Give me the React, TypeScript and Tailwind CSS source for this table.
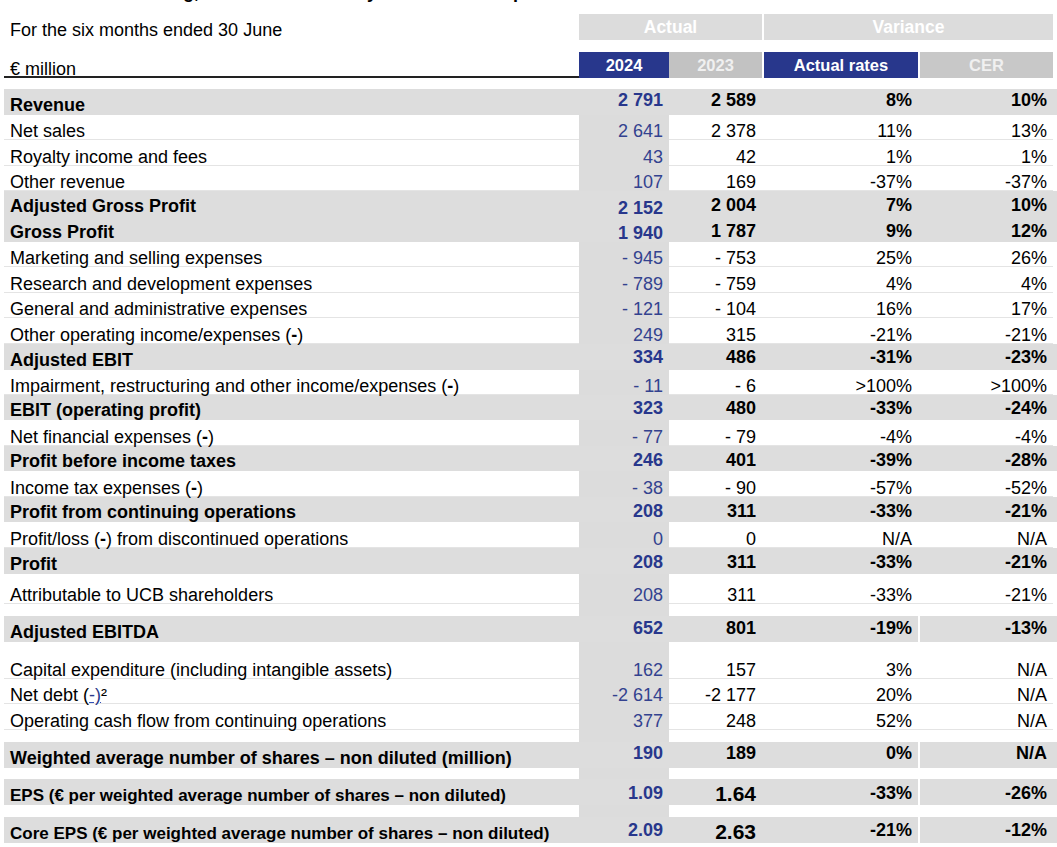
import React from "react";

type RowDef = {
  l: React.ReactNode;
  v?: [string, string, string, string];
  b?: boolean;
  h: number;
  gap?: boolean;
  small?: boolean;
  big?: boolean;
  spacer?: boolean;
  nt?: string;
  n24?: string;
};

const H: Record<number, string> = {
  11: "h-[11px]",
  12: "h-[12px]",
  25: "h-[25px]",
  26: "h-[26px]",
  30: "h-[30px]",
  37: "h-[37px]",
};

const GRID = "grid grid-cols-[575px_90px_93px_2px_154px_2px_133px]";

const M = () => <b>-</b>;

const rows: RowDef[] = [
  { l: "Revenue", v: ["2 791", "2 589", "8%", "10%"], b: true, h: 26, nt: "pb-[7px]" },
  { l: "Net sales", v: ["2 641", "2 378", "11%", "13%"], h: 25 },
  { l: "Royalty income and fees", v: ["43", "42", "1%", "1%"], h: 26 },
  { l: "Other revenue", v: ["107", "169", "-37%", "-37%"], h: 25 },
  {
    l: "Adjusted Gross Profit",
    v: ["2 152", "2 004", "7%", "10%"],
    b: true,
    h: 25,
    nt: "pb-[3px]",
    n24: "pb-[0px]",
  },
  {
    l: "Gross Profit",
    v: ["1 940", "1 787", "9%", "12%"],
    b: true,
    h: 26,
    nt: "pb-[3px]",
    n24: "pb-[1px]",
  },
  { l: "Marketing and selling expenses", v: ["- 945", "- 753", "25%", "26%"], h: 25 },
  { l: "Research and development expenses", v: ["- 789", "- 759", "4%", "4%"], h: 26 },
  { l: "General and administrative expenses", v: ["- 121", "- 104", "16%", "17%"], h: 25 },
  {
    l: (
      <>
        Other operating income/expenses (<M />)
      </>
    ),
    v: ["249", "315", "-21%", "-21%"],
    h: 26,
  },
  { l: "Adjusted EBIT", v: ["334", "486", "-31%", "-23%"], b: true, h: 26, nt: "pb-[5px]" },
  {
    l: (
      <>
        Impairment, restructuring and other income/expenses (<M />)
      </>
    ),
    v: ["- 11", "- 6", ">100%", ">100%"],
    h: 25,
  },
  { l: "EBIT (operating profit)", v: ["323", "480", "-33%", "-24%"], b: true, h: 25, nt: "pb-[4px]" },
  {
    l: (
      <>
        Net financial expenses (<M />)
      </>
    ),
    v: ["- 77", "- 79", "-4%", "-4%"],
    h: 26,
  },
  { l: "Profit before income taxes", v: ["246", "401", "-39%", "-28%"], b: true, h: 25, nt: "pb-[3px]" },
  {
    l: (
      <>
        Income tax expenses (<M />)
      </>
    ),
    v: ["- 38", "- 90", "-57%", "-52%"],
    h: 26,
  },
  {
    l: "Profit from continuing operations",
    v: ["208", "311", "-33%", "-21%"],
    b: true,
    h: 25,
    nt: "pb-[3px]",
  },
  {
    l: (
      <>
        Profit/loss (<M />) from discontinued operations
      </>
    ),
    v: ["0", "0", "N/A", "N/A"],
    h: 26,
  },
  { l: "Profit", v: ["208", "311", "-33%", "-21%"], b: true, h: 26, nt: "pb-[4px]" },
  { l: "Attributable to UCB shareholders", v: ["208", "311", "-33%", "-21%"], h: 30 },
  { l: "", spacer: true, h: 12 },
  {
    l: "Adjusted EBITDA",
    v: ["652", "801", "-19%", "-13%"],
    b: true,
    h: 26,
    gap: true,
    nt: "pb-[6px]",
  },
  { l: "Capital expenditure (including intangible assets)", v: ["162", "157", "3%", "N/A"], h: 37 },
  {
    l: (
      <>
        Net debt (<span className="text-[#2a3a8a] underline decoration-[#3050b8]">-)</span>²
      </>
    ),
    v: ["-2 614", "-2 177", "20%", "N/A"],
    h: 25,
  },
  { l: "Operating cash flow from continuing operations", v: ["377", "248", "52%", "N/A"], h: 26 },
  { l: "", spacer: true, h: 12 },
  {
    l: "Weighted average number of shares – non diluted (million)",
    v: ["190", "189", "0%", "N/A"],
    b: true,
    h: 26,
    gap: true,
    nt: "pb-[7px]",
  },
  { l: "", spacer: true, h: 11 },
  {
    l: "EPS (€ per weighted average number of shares – non diluted)",
    v: ["1.09", "1.64", "-33%", "-26%"],
    b: true,
    h: 26,
    gap: true,
    small: true,
    big: true,
    nt: "pb-[4px]",
  },
  { l: "", spacer: true, h: 12 },
  {
    l: "Core EPS (€ per weighted average number of shares – non diluted)",
    v: ["2.09", "2.63", "-21%", "-12%"],
    b: true,
    h: 26,
    gap: true,
    small: true,
    big: true,
    nt: "pb-[5px]",
  },
];

function Row({ r }: { r: RowDef }) {
  if (r.spacer) {
    return (
      <div className={`${GRID} ${H[r.h]}`}>
        <div />
        <div className="bg-[#dcdcdc]" />
        <div />
        <div />
        <div />
        <div />
        <div />
      </div>
    );
  }
  const v = r.v!;
  if (r.b) {
    const num = "flex items-end justify-end pr-[6px] font-bold text-[18px] leading-[16px] overflow-visible";
    const nt = r.nt ?? "";
    return (
      <div className={`${GRID} ${H[r.h]} bg-[#dddddd] overflow-hidden`}>
        <div
          className={`flex items-end pl-[6px] font-bold text-black whitespace-nowrap ${
            r.small ? "text-[17px] leading-[19px]" : "text-[18px] leading-[19px]"
          }`}
        >
          {r.l}
        </div>
        <div className={`${num} ${r.n24 ?? nt} text-[#28378c]`}>{v[0]}</div>
        <div
          className={`${
            r.big
              ? "flex items-end justify-end pr-[6px] pb-[1px] font-bold text-[21px] leading-[20px]"
              : `${num} ${nt}`
          } text-black`}
        >
          {v[1]}
        </div>
        <div />
        <div className={`${num} ${nt} text-black`}>{v[2]}</div>
        <div className={r.gap ? "bg-white" : ""} />
        <div className={`${num} ${nt} text-black`}>{v[3]}</div>
      </div>
    );
  }
  const cell = "flex items-end justify-end pr-[6px] text-[18px] leading-[16px] border-b border-[#e4e4e4]";
  return (
    <div className={`${GRID} ${H[r.h]}`}>
      <div className="flex items-end pl-[6px] text-[18px] leading-[16px] text-black whitespace-nowrap border-b border-[#e4e4e4]">
        <span>{r.l}</span>
      </div>
      <div className="flex items-end justify-end pr-[6px] pb-[1px] text-[18px] leading-[16px] bg-[#dcdcdc] text-[#33428f]">
        {v[0]}
      </div>
      <div className={`${cell} text-black`}>{v[1]}</div>
      <div className="border-b border-[#e4e4e4]" />
      <div className={`${cell} text-black`}>{v[2]}</div>
      <div className="border-b border-[#e4e4e4]" />
      <div className={`${cell} text-black`}>{v[3]}</div>
    </div>
  );
}

export default function App() {
  return (
    <div className="w-[1057px] h-[847px] overflow-hidden bg-white font-['Liberation_Sans',Arial,sans-serif] text-black">
      {/* clipped line from above */}
      <div className="h-[14px]">
        <div className="h-[3px] overflow-hidden">
          <div className="flex -mt-[18px] text-[18px] leading-[21px] font-bold whitespace-nowrap">
            <span className="w-[182px] text-right shrink-0">Main results excluding,</span>
            <span className="w-[195px] text-right shrink-0">at constant currency</span>
            <span className="w-[136px] text-right shrink-0">the ratios </span>
            <span className="shrink-0">per share</span>
          </div>
        </div>
      </div>

      <div className="pl-[4px]">
        {/* header row 1 */}
        <div className={`${GRID} h-[26px]`}>
          <div className="flex items-end pl-[6px] text-[18px] leading-[19px]">For the six months ended 30 June</div>
          <div className="col-span-2 flex items-center justify-center bg-[#dcdcdc] text-white font-bold text-[17.5px]">
            Actual
          </div>
          <div />
          <div className="col-span-3 flex items-center justify-center bg-[#dcdcdc] text-white font-bold text-[17.5px]">
            Variance
          </div>
        </div>
        <div className="h-[12px]" />
        {/* header row 2 */}
        <div className={`${GRID} h-[26px]`}>
          <div className="flex items-end pl-[6px] text-[18px] leading-[13px] border-b-2 border-[#222222]">€ million</div>
          <div className="flex items-center justify-center bg-[#28378c] text-white font-bold text-[16.5px]">2024</div>
          <div className="flex items-center justify-center bg-[#c2c2c2] text-[#f0f0f0] font-bold text-[16.5px]">2023</div>
          <div />
          <div className="flex items-center justify-center bg-[#28378c] text-white font-bold text-[16.5px]">
            Actual rates
          </div>
          <div />
          <div className="flex items-center justify-center bg-[#c8c8c8] text-[#f0f0f0] font-bold text-[16.5px]">CER</div>
        </div>
        <div className="h-[11px]" />
        {rows.map((r, i) => (
          <Row key={i} r={r} />
        ))}
      </div>
    </div>
  );
}
